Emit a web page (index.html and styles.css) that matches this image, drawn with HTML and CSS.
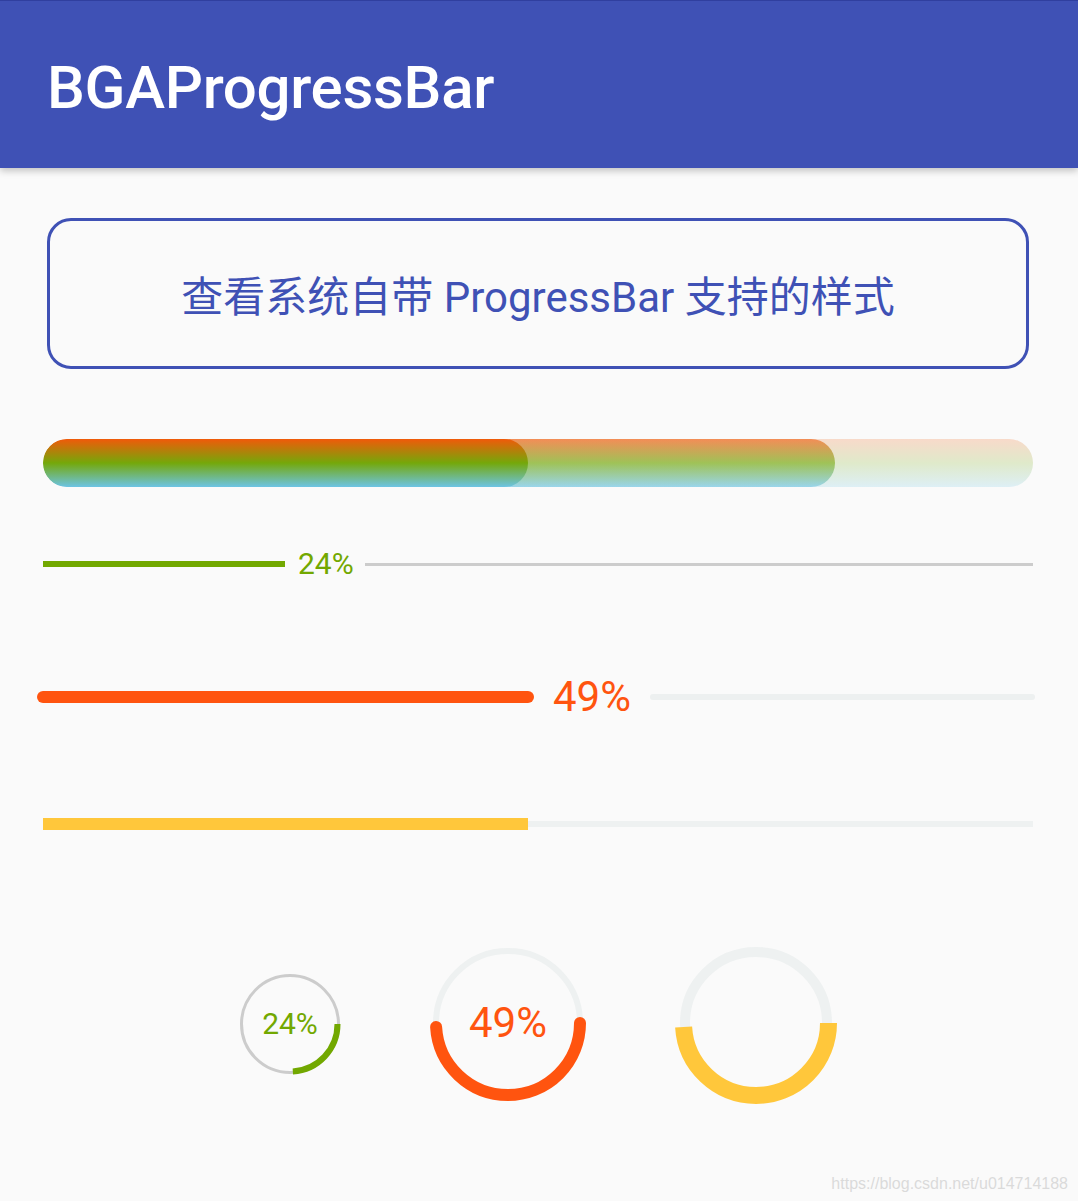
FILE: index.html
```html
<!DOCTYPE html>
<html lang="zh-CN">
<head>
  <meta charset="UTF-8">
  <meta name="viewport" content="width=device-width, initial-scale=1.0">
  <title>BGAProgressBar</title>
  <link rel="stylesheet" href="styles.css">
</head>
<body>
  <header class="toolbar">
    <h1 class="toolbar-title">BGAProgressBar</h1>
  </header>

  <main class="content">
    <button class="outline-btn">查看系统自带 ProgressBar 支持的样式</button>

    <!-- gradient bar: track / secondary / primary -->
    <div class="grad-bar">
      <div class="grad-secondary" style="width: 80%"></div>
      <div class="grad-primary" style="width: 49%"></div>
    </div>

    <div class="text-bar">
      <div class="text-bar-reach green"></div>
      <span class="text-bar-label green-text">24%</span>
      <div class="text-bar-rest"></div>
    </div>

    <div class="text-bar text-bar-big">
      <div class="text-bar-reach orange"></div>
      <span class="text-bar-label orange-text">49%</span>
      <div class="text-bar-rest"></div>
    </div>

    <div class="flat-bar">
      <div class="flat-bar-reach" style="width: 49%"></div>
      <div class="flat-bar-rest"></div>
    </div>

    <div class="circles">
      <div class="circle circle-sm">
        <svg width="102" height="102" viewBox="0 0 102 102">
          <circle cx="51" cy="51" r="48.5" fill="none" stroke="#cccccc" stroke-width="3"/>
          <circle cx="51" cy="51" r="47.5" fill="none" stroke="#72a800" stroke-width="6"
                  stroke-dasharray="71.6 400"/>
        </svg>
        <span class="circle-label green-text">24%</span>
      </div>

      <div class="circle circle-md">
        <svg width="156" height="156" viewBox="0 0 156 156">
          <circle cx="78" cy="78" r="72" fill="none" stroke="#eef1f1" stroke-width="6"/>
          <circle cx="78" cy="78" r="72" fill="none" stroke="#ff540f" stroke-width="12"
                  stroke-linecap="round" stroke-dasharray="221.7 600"/>
        </svg>
        <span class="circle-label circle-label-md orange-text">49%</span>
      </div>

      <div class="circle circle-lg">
        <svg width="162" height="162" viewBox="0 0 162 162">
          <circle cx="81" cy="81" r="71" fill="none" stroke="#eef1f1" stroke-width="10"/>
          <circle cx="81" cy="81" r="72.5" fill="none" stroke="#ffc73b" stroke-width="17"
                  stroke-dasharray="223.2 600"/>
        </svg>
      </div>
    </div>
  </main>

  <div class="watermark">https://blog.csdn.net/u014714188</div>
</body>
</html>
```

FILE: styles.css
```css
html, body {
  margin: 0;
  padding: 0;
}

body {
  background-color: #fafafa;
  font-family: Roboto, "Noto Sans CJK SC", sans-serif;
  width: 1078px;
  height: 1201px;
  position: relative;
  overflow: hidden;
}

.toolbar {
  height: 168px;
  box-sizing: border-box;
  background-color: #3f51b5;
  border-top: 1px solid #303f9f;
  padding: 6px 0 0 47px;
  display: flex;
  align-items: center;
  box-shadow: 0 3px 7px rgba(0, 0, 0, 0.22);
  position: relative;
  z-index: 1;
}

.toolbar-title {
  margin: 0;
  color: #ffffff;
  font-size: 60px;
  font-weight: 500;
  letter-spacing: -0.3px;
}

.content {
  padding: 50px 45px 0 43px;
  display: flex;
  flex-direction: column;
}

.outline-btn {
  margin: 0 4px;
  height: 151px;
  box-sizing: border-box;
  border: 3px solid #3f51b5;
  border-radius: 24px;
  background: transparent;
  color: #3f51b5;
  font-family: Roboto, "Noto Sans CJK SC", sans-serif;
  font-size: 42px;
  padding: 0;
}

/* gradient bar */
.grad-bar {
  margin-top: 70px;
  height: 48px;
  border-radius: 24px;
  position: relative;
  overflow: hidden;
  background: linear-gradient(to bottom, rgba(240, 90, 10, 0.2), rgba(116, 168, 10, 0.2) 50%, rgba(108, 196, 228, 0.2));
}

.grad-secondary,
.grad-primary {
  position: absolute;
  left: 0;
  top: 0;
  bottom: 0;
  border-radius: 24px;
}

.grad-secondary {
  background: linear-gradient(to bottom, rgba(240, 90, 10, 0.6), rgba(116, 168, 10, 0.6) 50%, rgba(108, 196, 228, 0.6));
}

.grad-primary {
  background: linear-gradient(to bottom, #f05a0a, #74a80a 50%, #6cc4e4);
}

/* bars with text */
.text-bar {
  margin-top: 62px;
  height: 30px;
  display: flex;
  align-items: center;
}

.text-bar-reach {
  flex: none;
}

.green {
  width: 242px;
  height: 6px;
  background-color: #72a800;
}

.green-text {
  color: #72a800;
}

.orange-text {
  color: #ff540f;
}

.text-bar-label {
  font-size: 30px;
  margin: 0 11px 0 13px;
  line-height: 30px;
}

.text-bar-rest {
  flex: 1;
  height: 3px;
  background-color: #cccccc;
}

.text-bar-big {
  margin-top: 97px;
  height: 42px;
}

.orange {
  width: 497px;
  height: 12px;
  margin-left: -6px;
  border-radius: 6px;
  background-color: #ff540f;
}

.text-bar-big .text-bar-label {
  font-size: 42px;
  line-height: 42px;
  margin: 0 19px 0 19px;
}

.text-bar-big .text-bar-rest {
  height: 6px;
  border-radius: 3px;
  margin-right: -2px;
  background-color: #edf0f0;
}

/* flat bar */
.flat-bar {
  margin-top: 100px;
  height: 12px;
  display: flex;
  align-items: center;
}

.flat-bar-reach {
  height: 12px;
  background-color: #ffc73b;
}

.flat-bar-rest {
  flex: 1;
  height: 6px;
  background-color: #eef1f1;
}

/* circles */
.circles {
  margin-top: 112px;
  display: flex;
  justify-content: center;
  align-items: center;
  gap: 89px;
}

.circle {
  position: relative;
  display: flex;
  align-items: center;
  justify-content: center;
}

.circle svg {
  display: block;
}

.circle-sm {
  margin-top: 2px;
}

.circle-label {
  position: absolute;
  left: 0;
  right: 0;
  top: 50%;
  transform: translateY(-50%);
  text-align: center;
  font-size: 30px;
  line-height: 30px;
}

.circle-label-md {
  font-size: 42px;
  line-height: 42px;
}

.watermark {
  position: absolute;
  right: 10px;
  bottom: 8px;
  font-family: "Liberation Sans", Arial, sans-serif;
  font-size: 16px;
  color: #dadada;
}
```
